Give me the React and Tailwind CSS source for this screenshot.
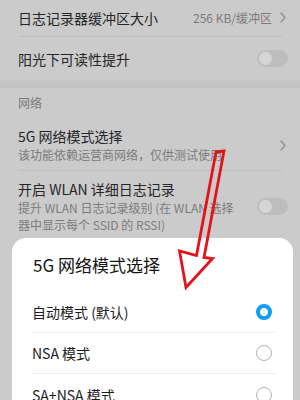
import React from "react";

function Chevron() {
  return (
    <svg width="6" height="11" viewBox="0 0 6 11" className="shrink-0">
      <path d="M1 1 L5 5.5 L1 10" fill="none" stroke="#8a8a8a" strokeWidth="1.2" strokeLinecap="round" strokeLinejoin="round" />
    </svg>
  );
}

function Toggle() {
  return (
    <div className="w-[31px] h-[17px] rounded-full bg-[#bdbdbd] flex items-center px-[2px] shrink-0">
      <div className="w-[13px] h-[13px] rounded-full bg-[#d6d6d6]" />
    </div>
  );
}

function Option({ label, selected, last }) {
  return (
    <div className={"h-[41px] flex items-center justify-between pr-[3px] " + (last ? "" : "border-b border-[#ececec]")}>
      <span className="text-[14px] leading-[20px] text-[#1c1c1c]">{label}</span>
      {selected ? (
        <div className="w-[16px] h-[16px] rounded-full border-[4px] border-[#0c9cf1] bg-white" />
      ) : (
        <div className="w-[16px] h-[16px] rounded-full border border-[#b3b3b3] bg-white" />
      )}
    </div>
  );
}

export default function App() {
  return (
    <div className="w-[300px] h-[400px] overflow-hidden bg-[#cbcbcb] relative font-['Noto_Sans_CJK_SC','Noto_Sans',sans-serif]">
      {/* Row 1 */}
      <div className="h-[36px] pb-[1px] pl-[18px] pr-[14px] flex items-center justify-between">
        <span className="text-[14px] leading-[20px] text-[#262626]">日志记录器缓冲区大小</span>
        <div className="flex items-center gap-[8px]">
          <span className="text-[12px] leading-[16px] text-[#7b7b7b]">256 KB/缓冲区</span>
          <Chevron />
        </div>
      </div>
      <div className="mx-[18px] h-px bg-[#bdbdbd]" />
      {/* Row 2 */}
      <div className="h-[43px] pl-[18px] pr-[12px] flex items-center justify-between">
        <span className="text-[14px] leading-[20px] text-[#262626]">阳光下可读性提升</span>
        <Toggle />
      </div>
      <div className="h-[8px] bg-gradient-to-b from-[#c6c6c6] to-[#c2c2c2]" />
      {/* Section label */}
      <div className="pt-[7px] pl-[18px] text-[12px] leading-[16px] text-[#7b7b7b]">网络</div>
      {/* 5G row */}
      <div className="pt-[15px] pb-[6px] pl-[18px] pr-[14px] flex items-center justify-between">
        <div className="flex flex-col">
          <span className="text-[14px] leading-[20px] text-[#262626]">5G 网络模式选择</span>
          <span className="text-[12px] leading-[18px] text-[#7b7b7b]">该功能依赖运营商网络，仅供测试使用</span>
        </div>
        <Chevron />
      </div>
      <div className="mx-[18px] h-px bg-[#bdbdbd]" />
      {/* WLAN row */}
      <div className="pt-[8px] pl-[18px] pr-[12px] flex items-center justify-between">
        <div className="flex flex-col w-[230px]">
          <span className="text-[14px] leading-[20px] text-[#262626]">开启 WLAN 详细日志记录</span>
          <span className="text-[12px] leading-[17px] text-[#7b7b7b]">提升 WLAN 日志记录级别 (在 WLAN 选择<br />器中显示每个 SSID 的 RSSI)</span>
        </div>
        <Toggle />
      </div>
      {/* Dialog card */}
      <div className="mt-[5px] ml-[12px] w-[281px] h-[200px] rounded-t-[14px] bg-white">
        <div className="pt-[17px] pl-[21px] text-[17px] leading-[20px] text-[#141414]">5G 网络模式选择</div>
        <div className="mt-[17px] ml-[20px] mr-[18px]">
          <Option label="自动模式 (默认)" selected />
          <Option label="NSA 模式" />
          <Option label="SA+NSA 模式" last />
        </div>
      </div>
      {/* Red arrow annotation */}
      <svg className="absolute left-0 top-0 pointer-events-none" width="300" height="400" viewBox="0 0 300 400">
        <path
          d="M216 152 L224 151 L204 257.5 L212.5 258.5 L186 287.5 L179.5 251 L196.5 255.5 Z"
          fill="none"
          stroke="#e3121b"
          strokeWidth="2.8"
          strokeLinejoin="miter"
        />
      </svg>
    </div>
  );
}
